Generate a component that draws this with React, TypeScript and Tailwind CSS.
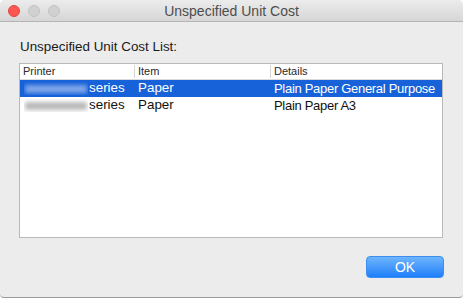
import React from "react";

const font = { fontFamily: '"Liberation Sans", Arial, sans-serif' };

const Blurred: React.FC<{ selected?: boolean }> = ({ selected }) => (
  <div className="relative h-[13px] w-[64px] shrink-0 overflow-hidden">
    <div
      className={`absolute inset-x-[1px] top-[3px] h-[8px] blur-[2px] ${
        selected ? "bg-[#7fa6ea]" : "bg-[#b9b9b9]"
      }`}
    />
  </div>
);

const rows = [
  { item: "Paper", details: "Plain Paper General Purpose", selected: true },
  { item: "Paper", details: "Plain Paper A3", selected: false },
];

export default function App() {
  return (
    <div
      className="w-[463px] h-[298px] bg-[#ececec] flex flex-col rounded-t-[5px] rounded-b-[4px] border-b border-[#9a9a9a] overflow-hidden"
      style={font}
    >
      {/* title bar */}
      <div className="relative h-[22px] shrink-0 bg-gradient-to-b from-[#ececec] to-[#d6d6d6] border-b border-[#b4b4b4] flex items-center justify-center">
        <div className="absolute left-[8px] top-[5px] flex gap-[8px]">
          <span className="w-[12px] h-[12px] rounded-full bg-[#fc5753] border border-[#df4744]" />
          <span className="w-[12px] h-[12px] rounded-full bg-[#d1d1d1] border border-[#c2c2c2]" />
          <span className="w-[12px] h-[12px] rounded-full bg-[#d1d1d1] border border-[#c2c2c2]" />
        </div>
        <span className="text-[14px] leading-[16px] pt-[1px] text-[#4d4d4d]">Unspecified Unit Cost</span>
      </div>

      <div className="flex flex-col px-[19px] pt-[17px]">
        <div className="pl-[1px] text-[13.4px] leading-[16px] text-[#1a1a1a] whitespace-nowrap">
          Unspecified Unit Cost List:
        </div>

        {/* table */}
        <div className="mt-[8px] w-[424px] h-[175px] bg-white border border-[#b9b9b9] flex flex-col">
          <div className="h-[16px] flex items-center text-[11px] text-[#2a2a2a] border-b border-[#dadada] whitespace-nowrap">
            <div className="w-[114px] shrink-0 pl-[3px]">Printer</div>
            <div className="w-[136px] shrink-0 pl-[3px] border-l border-[#d4d4d4] h-[13px] leading-[13px]">
              Item
            </div>
            <div className="flex-1 pl-[3px] border-l border-[#d4d4d4] h-[13px] leading-[13px]">
              Details
            </div>
          </div>
          {rows.map((r, i) => (
            <div
              key={i}
              className={`h-[17px] flex items-center text-[13.4px] whitespace-nowrap ${
                r.selected ? "bg-[#1762d8] text-white" : "text-[#111]"
              }`}
            >
              <div className="w-[115px] shrink-0 pl-[4px] flex items-center">
                <Blurred selected={r.selected} />
                <span className="ml-[1px]">series</span>
              </div>
              <div className="w-[136px] shrink-0 pl-[3px]">{r.item}</div>
              <div className="flex-1 min-w-0 pl-[3px] text-[13px] tracking-[-0.3px]">{r.details}</div>
            </div>
          ))}
        </div>

        <div className="flex justify-end mt-[18px]">
          <button className="w-[78px] h-[22px] rounded-[4px] bg-gradient-to-b from-[#6db4fb] to-[#1a7ffa] border border-[#3d8ef0] text-white text-[14px] leading-[20px]">
            OK
          </button>
        </div>
      </div>
    </div>
  );
}
